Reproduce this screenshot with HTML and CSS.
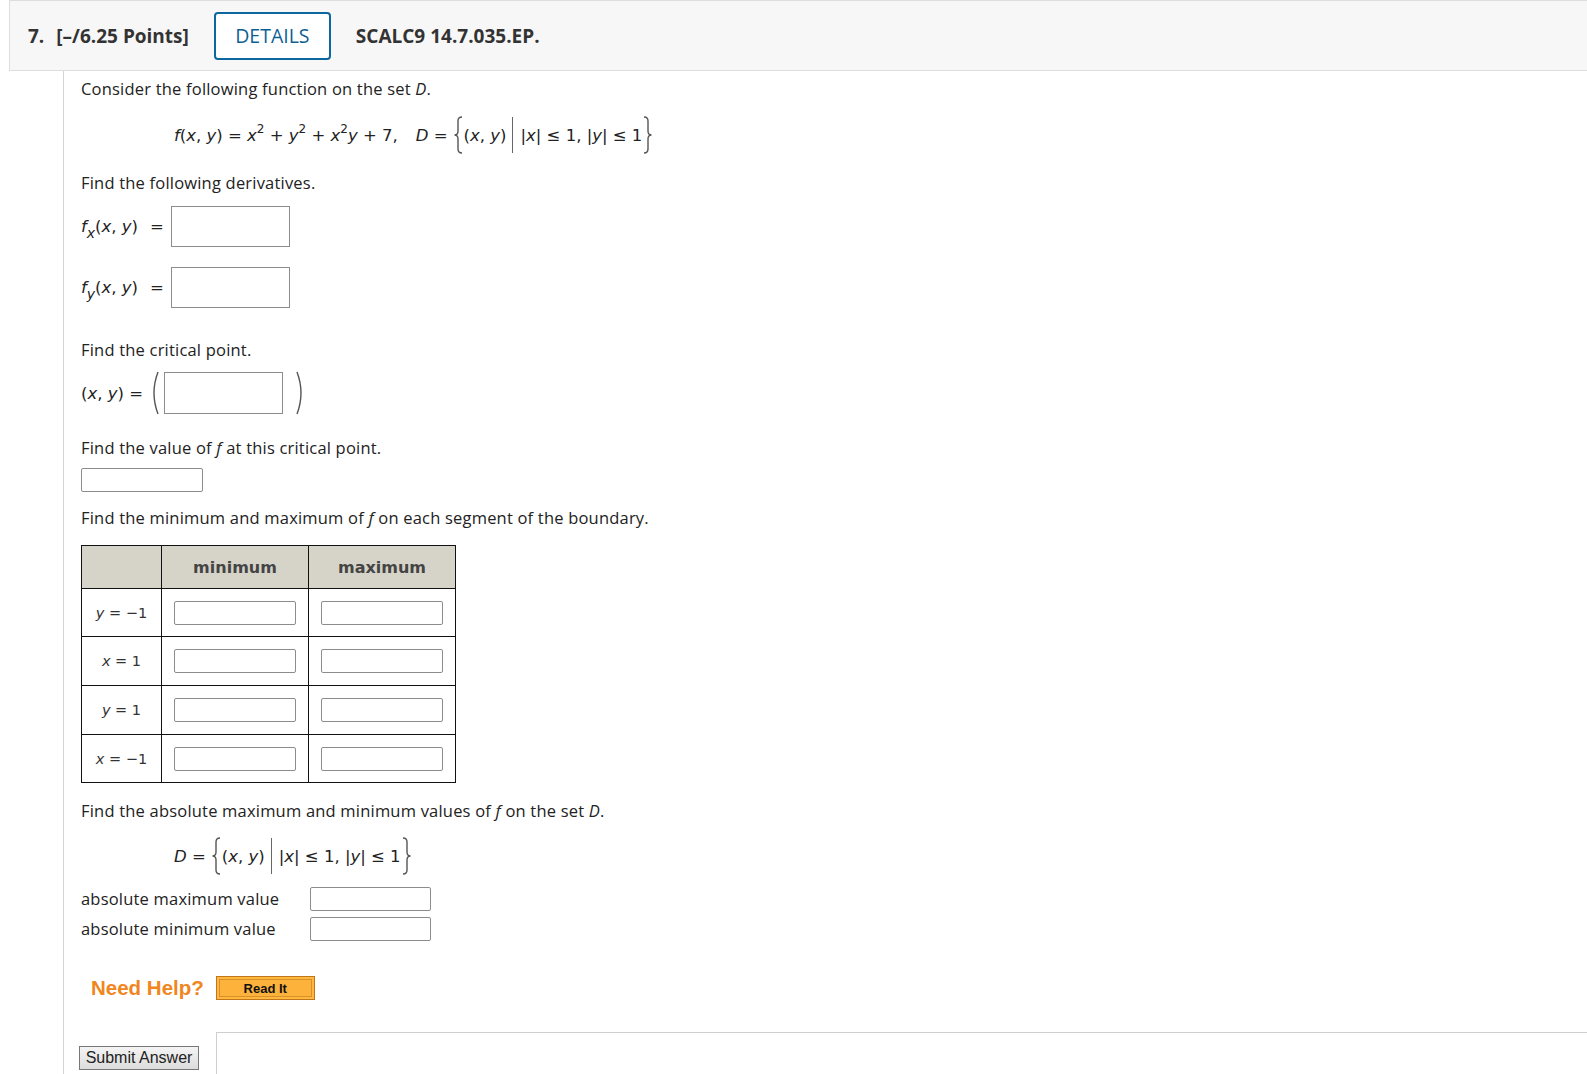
FILE: index.html
```html
<!DOCTYPE html>
<html lang="en">
<head>
<meta charset="utf-8">
<title>Question 7</title>
<link rel="stylesheet" href="styles.css">
</head>
<body>
<header class="qhead">
  <span class="qnum">7.</span>
  <span class="pts">[–/6.25 Points]</span>
  <button class="details">DETAILS</button>
  <span class="code">SCALC9 14.7.035.EP.</span>
</header>
<main class="qbody">
  <p class="txt l1">Consider the following function on the set <i>D</i>.</p>

  <div class="formula">
    <span class="m"><i>f</i>(<i>x</i>, <i>y</i>) = <i>x</i><sup>2</sup> + <i>y</i><sup>2</sup> + <i>x</i><sup>2</sup><i>y</i> + 7,</span>
    <span class="m dlab"><i>D</i> =</span>
    <svg class="brace" width="11" height="38" viewBox="0 0 11 38"><path d="M9,1 Q5,1 5,5 L5,15 Q5,19 1.5,19 Q5,19 5,23 L5,33 Q5,37 9,37" /></svg>
    <span class="m">(<i>x</i>, <i>y</i>)</span>
    <span class="vbar"></span>
    <span class="m">|<i>x</i>| ≤ 1, |<i>y</i>| ≤ 1</span>
    <svg class="brace" width="11" height="38" viewBox="0 0 11 38"><path d="M2,1 Q6,1 6,5 L6,15 Q6,19 9.5,19 Q6,19 6,23 L6,33 Q6,37 2,37" /></svg>
  </div>

  <p class="txt l3">Find the following derivatives.</p>

  <div class="drow r1">
    <span class="m dlabel"><i>f</i><sub><i>x</i></sub>(<i>x</i>, <i>y</i>)<span class="eq">=</span></span>
    <input class="bigbox" type="text">
  </div>
  <div class="drow r2">
    <span class="m dlabel"><i>f</i><sub><i>y</i></sub>(<i>x</i>, <i>y</i>)<span class="eq">=</span></span>
    <input class="bigbox" type="text">
  </div>

  <p class="txt l4">Find the critical point.</p>

  <div class="crow">
    <span class="m clabel">(<i>x</i>, <i>y</i>) =</span>
    <svg class="paren" width="12" height="44" viewBox="0 0 12 44"><path d="M9,1 Q1,22 9,43" /></svg>
    <input class="bigbox crit" type="text">
    <svg class="paren rp" width="12" height="44" viewBox="0 0 12 44"><path d="M3,1 Q11,22 3,43" /></svg>
  </div>

  <p class="txt l5">Find the value of <i>f</i> at this critical point.</p>
  <input class="smbox vbox" type="text">

  <p class="txt l6">Find the minimum and maximum of <i>f</i> on each segment of the boundary.</p>

  <table class="bnd">
    <thead>
      <tr><th class="corner"></th><th>minimum</th><th>maximum</th></tr>
    </thead>
    <tbody>
      <tr><td class="lbl m"><i>y</i> = −1</td><td class="cell"><input class="tin" type="text"></td><td class="cell"><input class="tin" type="text"></td></tr>
      <tr><td class="lbl m"><i>x</i> = 1</td><td class="cell"><input class="tin" type="text"></td><td class="cell"><input class="tin" type="text"></td></tr>
      <tr><td class="lbl m"><i>y</i> = 1</td><td class="cell"><input class="tin" type="text"></td><td class="cell"><input class="tin" type="text"></td></tr>
      <tr><td class="lbl m"><i>x</i> = −1</td><td class="cell"><input class="tin" type="text"></td><td class="cell"><input class="tin" type="text"></td></tr>
    </tbody>
  </table>

  <p class="txt l7">Find the absolute maximum and minimum values of <i>f</i> on the set <i>D</i>.</p>

  <div class="formula f2">
    <span class="m dlab2"><i>D</i> =</span>
    <svg class="brace" width="11" height="38" viewBox="0 0 11 38"><path d="M9,1 Q5,1 5,5 L5,15 Q5,19 1.5,19 Q5,19 5,23 L5,33 Q5,37 9,37" /></svg>
    <span class="m">(<i>x</i>, <i>y</i>)</span>
    <span class="vbar"></span>
    <span class="m">|<i>x</i>| ≤ 1, |<i>y</i>| ≤ 1</span>
    <svg class="brace" width="11" height="38" viewBox="0 0 11 38"><path d="M2,1 Q6,1 6,5 L6,15 Q6,19 9.5,19 Q6,19 6,23 L6,33 Q6,37 2,37" /></svg>
  </div>

  <div class="arow a1">
    <span class="txt alabel">absolute maximum value</span>
    <input class="smbox abox" type="text">
  </div>
  <div class="arow a2">
    <span class="txt alabel">absolute minimum value</span>
    <input class="smbox abox" type="text">
  </div>

  <div class="help">
    <span class="needhelp">Need Help?</span>
    <button class="readit">Read It</button>
  </div>

  <div class="submitrow">
    <button class="submit">Submit Answer</button>
    <div class="feedback"></div>
  </div>
</main>
</body>
</html>
```

FILE: styles.css
```css
* { box-sizing: border-box; }

html, body {
  margin: 0;
  background: #fff;
  overflow: hidden;
}

body {
  font-family: "Open Sans", "Noto Sans", sans-serif;
  color: #222;
}

/* ---------- header ---------- */
.qhead {
  margin-left: 9px;
  margin-right: -4px;
  height: 71px;
  background: #f7f7f7;
  border: 1px solid #dedede;
  display: flex;
  align-items: center;
  padding-left: 18px;
  font-weight: 700;
  font-size: 19px;
  color: #333;
}

.qnum { margin-right: 12px; }

.details {
  margin-left: 25px;
  width: 117px;
  height: 48px;
  border: 2px solid #0d679f;
  border-radius: 4px;
  background: #fff;
  color: #0d5f94;
  font-family: "Open Sans", sans-serif;
  font-weight: 500;
  font-size: 19.5px;
  padding: 0;
}

.code { margin-left: 25px; }

/* ---------- body ---------- */
.qbody {
  margin-left: 63px;
  border-left: 1px solid #d4d4d4;
  padding: 8px 0 0 17px;
  min-height: 1010px;
}

.txt {
  font-size: 16.5px;
  letter-spacing: 0.2px;
  line-height: 20px;
  margin: 0;
  color: #222;
}

.m {
  font-family: "DejaVu Sans", Verdana, sans-serif;
  font-size: 16.5px;
  color: #222;
}

.m sup {
  font-size: 12px;
  vertical-align: 8px;
  line-height: 0;
}

.m sub {
  font-size: 14px;
  vertical-align: -6px;
  line-height: 0;
}

.l3 { margin-top: 18px; }
.l4 { margin-top: 32px; }
.l5 { margin-top: 24px; }
.l6 { margin-top: 16px; }
.l7 { margin-top: 18px; }

/* formula rows */
.formula {
  margin-top: 16px;
  height: 40px;
  display: flex;
  align-items: center;
  padding-left: 93px;
}

.formula .dlab { margin-left: 18px; margin-right: 5px; }
.formula .dlab2 { margin-right: 5px; }
.f2 { margin-top: 15px; }

.brace path, .paren path {
  fill: none;
  stroke: #555;
  stroke-width: 1.4;
}

.vbar {
  width: 0;
  height: 36px;
  border-left: 1.5px solid #666;
  margin: 0 7px 0 6px;
}

/* derivative rows */
.drow {
  display: flex;
  align-items: center;
  height: 41px;
}
.r1 { margin-top: 13px; }
.r2 { margin-top: 20px; }

.dlabel { width: 90px; white-space: nowrap; }
.eq { margin-left: 12px; }

input { font: inherit; margin: 0; padding: 0; background: #fff; }

.bigbox {
  width: 119px;
  height: 41px;
  border: 1px solid #8c8c8c;
}

/* critical row */
.crow {
  margin-top: 12px;
  height: 42px;
  display: flex;
  align-items: center;
}
.clabel { width: 68px; white-space: nowrap; }
.paren { margin-right: 3px; }
.paren.rp { margin-left: 11px; }
.crit { height: 42px; }

.smbox {
  width: 122px;
  height: 24px;
  border: 1px solid #8c8c8c;
  border-radius: 2px;
  display: block;
}
.vbox { margin-top: 10px; }

/* table */
.bnd {
  margin-top: 17px;
  border-collapse: collapse;
  width: 375px;
}

.bnd th, .bnd td {
  border: 1px solid #111;
  padding: 0;
}

.bnd th {
  background: #d6d3c8;
  height: 43px;
  font-family: "DejaVu Sans", Verdana, sans-serif;
  font-size: 16px;
  font-weight: 700;
  color: #444;
}

.bnd th.corner { width: 80px; }

.bnd td { height: 48px; }
.bnd tbody tr:nth-child(2) td,
.bnd tbody tr:nth-child(3) td { height: 49px; }

.bnd .lbl {
  text-align: center;
  font-size: 14.5px;
  color: #333;
}

.bnd .cell { width: 147px; padding-left: 12px; }

.tin {
  display: block;
  width: 122px;
  height: 24px;
  border: 1px solid #8c8c8c;
  border-radius: 2px;
}

/* absolute rows */
.arow {
  display: flex;
  align-items: center;
  height: 24px;
}
.a1 { margin-top: 11px; }
.a2 { margin-top: 6px; }
.alabel { width: 229px; }
.abox { width: 121px; }

/* help */
.help {
  margin-top: 35px;
  height: 24px;
  display: flex;
  align-items: center;
  padding-left: 10px;
}

.needhelp {
  font-family: "Liberation Sans", Arial, sans-serif;
  font-weight: 700;
  font-size: 20.5px;
  color: #f0861d;
}

.readit {
  margin-left: 12px;
  width: 99px;
  height: 24px;
  border: 1px solid #c27519;
  background: #fdb23c;
  box-shadow: inset 0 0 0 2px #fdb840, inset 0 0 0 3px #d9902b;
  font-family: "Liberation Sans", Arial, sans-serif;
  font-weight: 700;
  font-size: 13px;
  color: #111;
  padding: 0;
}

/* submit */
.submitrow {
  margin-top: 32px;
  display: flex;
  align-items: flex-start;
  margin-left: -2px;
}

.submit {
  margin-top: 14px;
  width: 120px;
  height: 24px;
  border: 1px solid #777;
  background: linear-gradient(#f4f4f4, #dcdcdc);
  font-family: "Liberation Sans", Arial, sans-serif;
  font-size: 16px;
  color: #222;
  padding: 0;
}

.feedback {
  margin-left: 17px;
  flex: 1;
  height: 60px;
  border-top: 1px solid #cfcfcf;
  border-left: 1px solid #cfcfcf;
}
```
